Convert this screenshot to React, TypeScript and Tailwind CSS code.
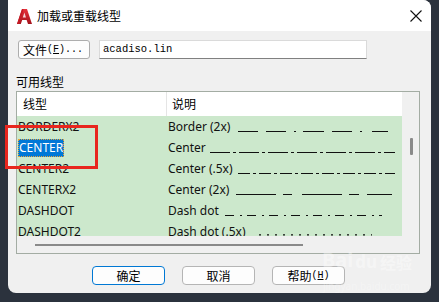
import React from "react";

const cjk = { fontFamily: '"Noto Sans CJK SC", "Noto Sans", sans-serif' };
const ui = { fontFamily: '"Noto Sans", "Noto Sans CJK SC", sans-serif' };
const mono = { fontFamily: '"Liberation Mono", "Noto Sans CJK SC", monospace' };

type Seg = [number, number];

function gen(start: number, end: number, pattern: [number, number][]): Seg[] {
  const out: Seg[] = [];
  let x = start;
  let i = 0;
  while (x < end) {
    const [len, gap] = pattern[i % pattern.length];
    out.push([x, Math.min(x + len, end)]);
    x += len + gap;
    i++;
  }
  return out;
}

const rows: { name: string; label: string; segs: Seg[]; y: number }[] = [
  {
    name: "BORDERX2",
    label: "Border (2x)",
    segs: [[70, 90], [98, 118], [126, 128], [135, 156], [164, 184], [192, 194], [204, 220]],
    y: 15.5,
  },
  { name: "CENTER", label: "Center", segs: gen(42, 227, [[20, 3], [3, 3]]), y: 15.5 },
  { name: "CENTER2", label: "Center (.5x)", segs: gen(70, 227, [[12, 3], [3, 3]]), y: 15.5 },
  {
    name: "CENTERX2",
    label: "Center (2x)",
    segs: [[68, 108], [115, 124], [134, 174], [181, 191], [199, 224]],
    y: 15.5,
  },
  { name: "DASHDOT", label: "Dash dot", segs: gen(57, 214, [[9, 6], [2, 5]]), y: 15.5 },
  { name: "DASHDOT2", label: "Dash dot (.5x)", segs: gen(91, 204, [[2, 6]]), y: 13.8 },
];

function AcadIcon() {
  return (
    <svg width="15" height="15" viewBox="0 0 15 15">
      <defs>
        <linearGradient id="ag" x1="0" y1="0" x2="0" y2="1">
          <stop offset="0" stopColor="#e8323c" />
          <stop offset="1" stopColor="#a3121c" />
        </linearGradient>
      </defs>
      <polygon points="5,0 10,0 15,15 11,15 9.6,11 5.2,11 3.8,15 0,15" fill="url(#ag)" />
      <polygon points="7.4,3.6 9,8.4 5.8,8.4" fill="#f6d6d8" />
      <polygon points="0,15 5,0 6.5,0 2.5,15" fill="#c41a25" />
    </svg>
  );
}

export default function App() {
  return (
    <div className="relative w-[439px] h-[302px] bg-[#2b323d] overflow-hidden">
      <div className="ml-[8px] w-[423px] h-[293px] bg-[#f0f0f0] rounded-tr-[8px] rounded-b-[8px] overflow-hidden flex flex-col">
        {/* title bar */}
        <div className="h-[31px] bg-white flex items-center shrink-0 relative">
          <div className="ml-[9px] mt-[2px]">
            <AcadIcon />
          </div>
          <span className="ml-[5px] text-[12px] text-black leading-none" style={cjk}>
            加载或重载线型
          </span>
          <svg className="absolute left-[402px] top-[10px]" width="12" height="12" viewBox="0 0 12 12">
            <path d="M0.5 0.5 L11.5 11.5 M11.5 0.5 L0.5 11.5" stroke="#111" strokeWidth="1.1" />
          </svg>
        </div>
        {/* file row */}
        <div className="flex items-center mt-[9px] ml-[10px]">
          <div className="w-[72px] h-[19px] border border-[#adadad] rounded-[3px] bg-[#fdfdfd] flex items-center pl-[4px] text-[12px] text-black leading-none">
            <span style={cjk}>文件</span>
            <span style={mono} className="text-[10px]">
              (<span className="underline">F</span>)...
            </span>
          </div>
          <div className="ml-[9px] w-[268px] h-[19px] bg-white border border-[#dadada] border-b-[#808080] flex items-center pl-[3px]">
            <span style={mono} className="text-[10.5px] text-black leading-none">
              acadiso.lin
            </span>
          </div>
        </div>
        {/* label */}
        <div className="ml-[8px] mt-[15px] text-[12px] leading-[16px] text-black" style={cjk}>
          可用线型
        </div>
        {/* list box */}
        <div className="ml-[8px] mt-[1px] w-[404px] h-[163px] border border-[#a3aca3] flex flex-col bg-[#f0f0f0]">
          <div className="flex h-[144px]">
            <div className="w-[385px] flex flex-col">
              <div className="h-[24px] bg-white flex items-center text-[12px] text-black shrink-0" style={cjk}>
                <div className="w-[150px] pl-[6px] h-full flex items-center border-r border-[#e5e5e5]">线型</div>
                <div className="pl-[5px]">说明</div>
              </div>
              <div className="h-[120px] bg-[#cce8cc] overflow-hidden">
                {rows.map((r, i) => (
                  <div key={r.name} className="h-[21px] flex items-center text-[12px] text-[#111]" style={ui}>
                    <div className="w-[151px] pl-[1px] flex items-center">
                      {i === 1 ? (
                        <span className="bg-[#0078d7] text-white h-[18px] w-[46px] flex items-center border border-dotted border-[#e8a33a]">
                          CENTER
                        </span>
                      ) : (
                        <span>{r.name}</span>
                      )}
                    </div>
                    <div className="relative w-[234px] h-[21px] flex items-center">
                      <span className="whitespace-pre">{r.label}</span>
                      <svg className="absolute left-0 top-0" width="234" height="21" viewBox="0 0 234 21">
                        {r.segs.map(([a, b], k) => (
                          <line key={k} x1={a} x2={b} y1={r.y} y2={r.y} stroke="#111" strokeWidth="1.2" />
                        ))}
                      </svg>
                    </div>
                  </div>
                ))}
              </div>
            </div>
            <div className="w-[17px] relative">
              <div className="absolute left-[8px] top-[46px] w-[3px] h-[17px] bg-[#8a8a8a] rounded-[1px]" />
            </div>
          </div>
          <div className="h-[17px] relative">
            <div className="absolute left-[18px] top-[8px] w-[268px] h-[2px] bg-[#8a8a8a]" />
          </div>
        </div>
        {/* buttons */}
        <div className="flex ml-[84px] mt-[12px] gap-[17px] text-[12px] text-black" style={cjk}>
          <div className="w-[73px] h-[19px] border border-[#0078d4] rounded-[4px] bg-[#fdfdfd] flex items-center justify-center leading-none">
            确定
          </div>
          <div className="w-[73px] h-[19px] border border-[#b5b5b5] rounded-[4px] bg-[#fdfdfd] flex items-center justify-center leading-none">
            取消
          </div>
          <div className="w-[73px] h-[19px] border border-[#b5b5b5] rounded-[4px] bg-[#fdfdfd] flex items-center justify-center leading-none">
            帮助<span style={mono} className="text-[10px]">(<span className="underline">H</span>)</span>
          </div>
        </div>
      </div>
      {/* red annotation box */}
      <div className="absolute left-[5px] top-[125px] w-[93px] h-[44px] border-[3px] border-[#e8261e]" />
      {/* watermark */}
      <div className="absolute left-[322px] top-[250px] flex items-end text-white/40 font-bold leading-none" style={ui}>
        <span className="text-[20px]">Bai</span>
        <span className="text-[17px] ml-[2px]">du</span>
        <span className="text-[16px] ml-[3px]" style={cjk}>经验</span>
      </div>
      <div className="absolute left-[323px] top-[281px] text-[10px] text-white/30 leading-none" style={ui}>
        jingyan.baidu.com
      </div>
    </div>
  );
}
